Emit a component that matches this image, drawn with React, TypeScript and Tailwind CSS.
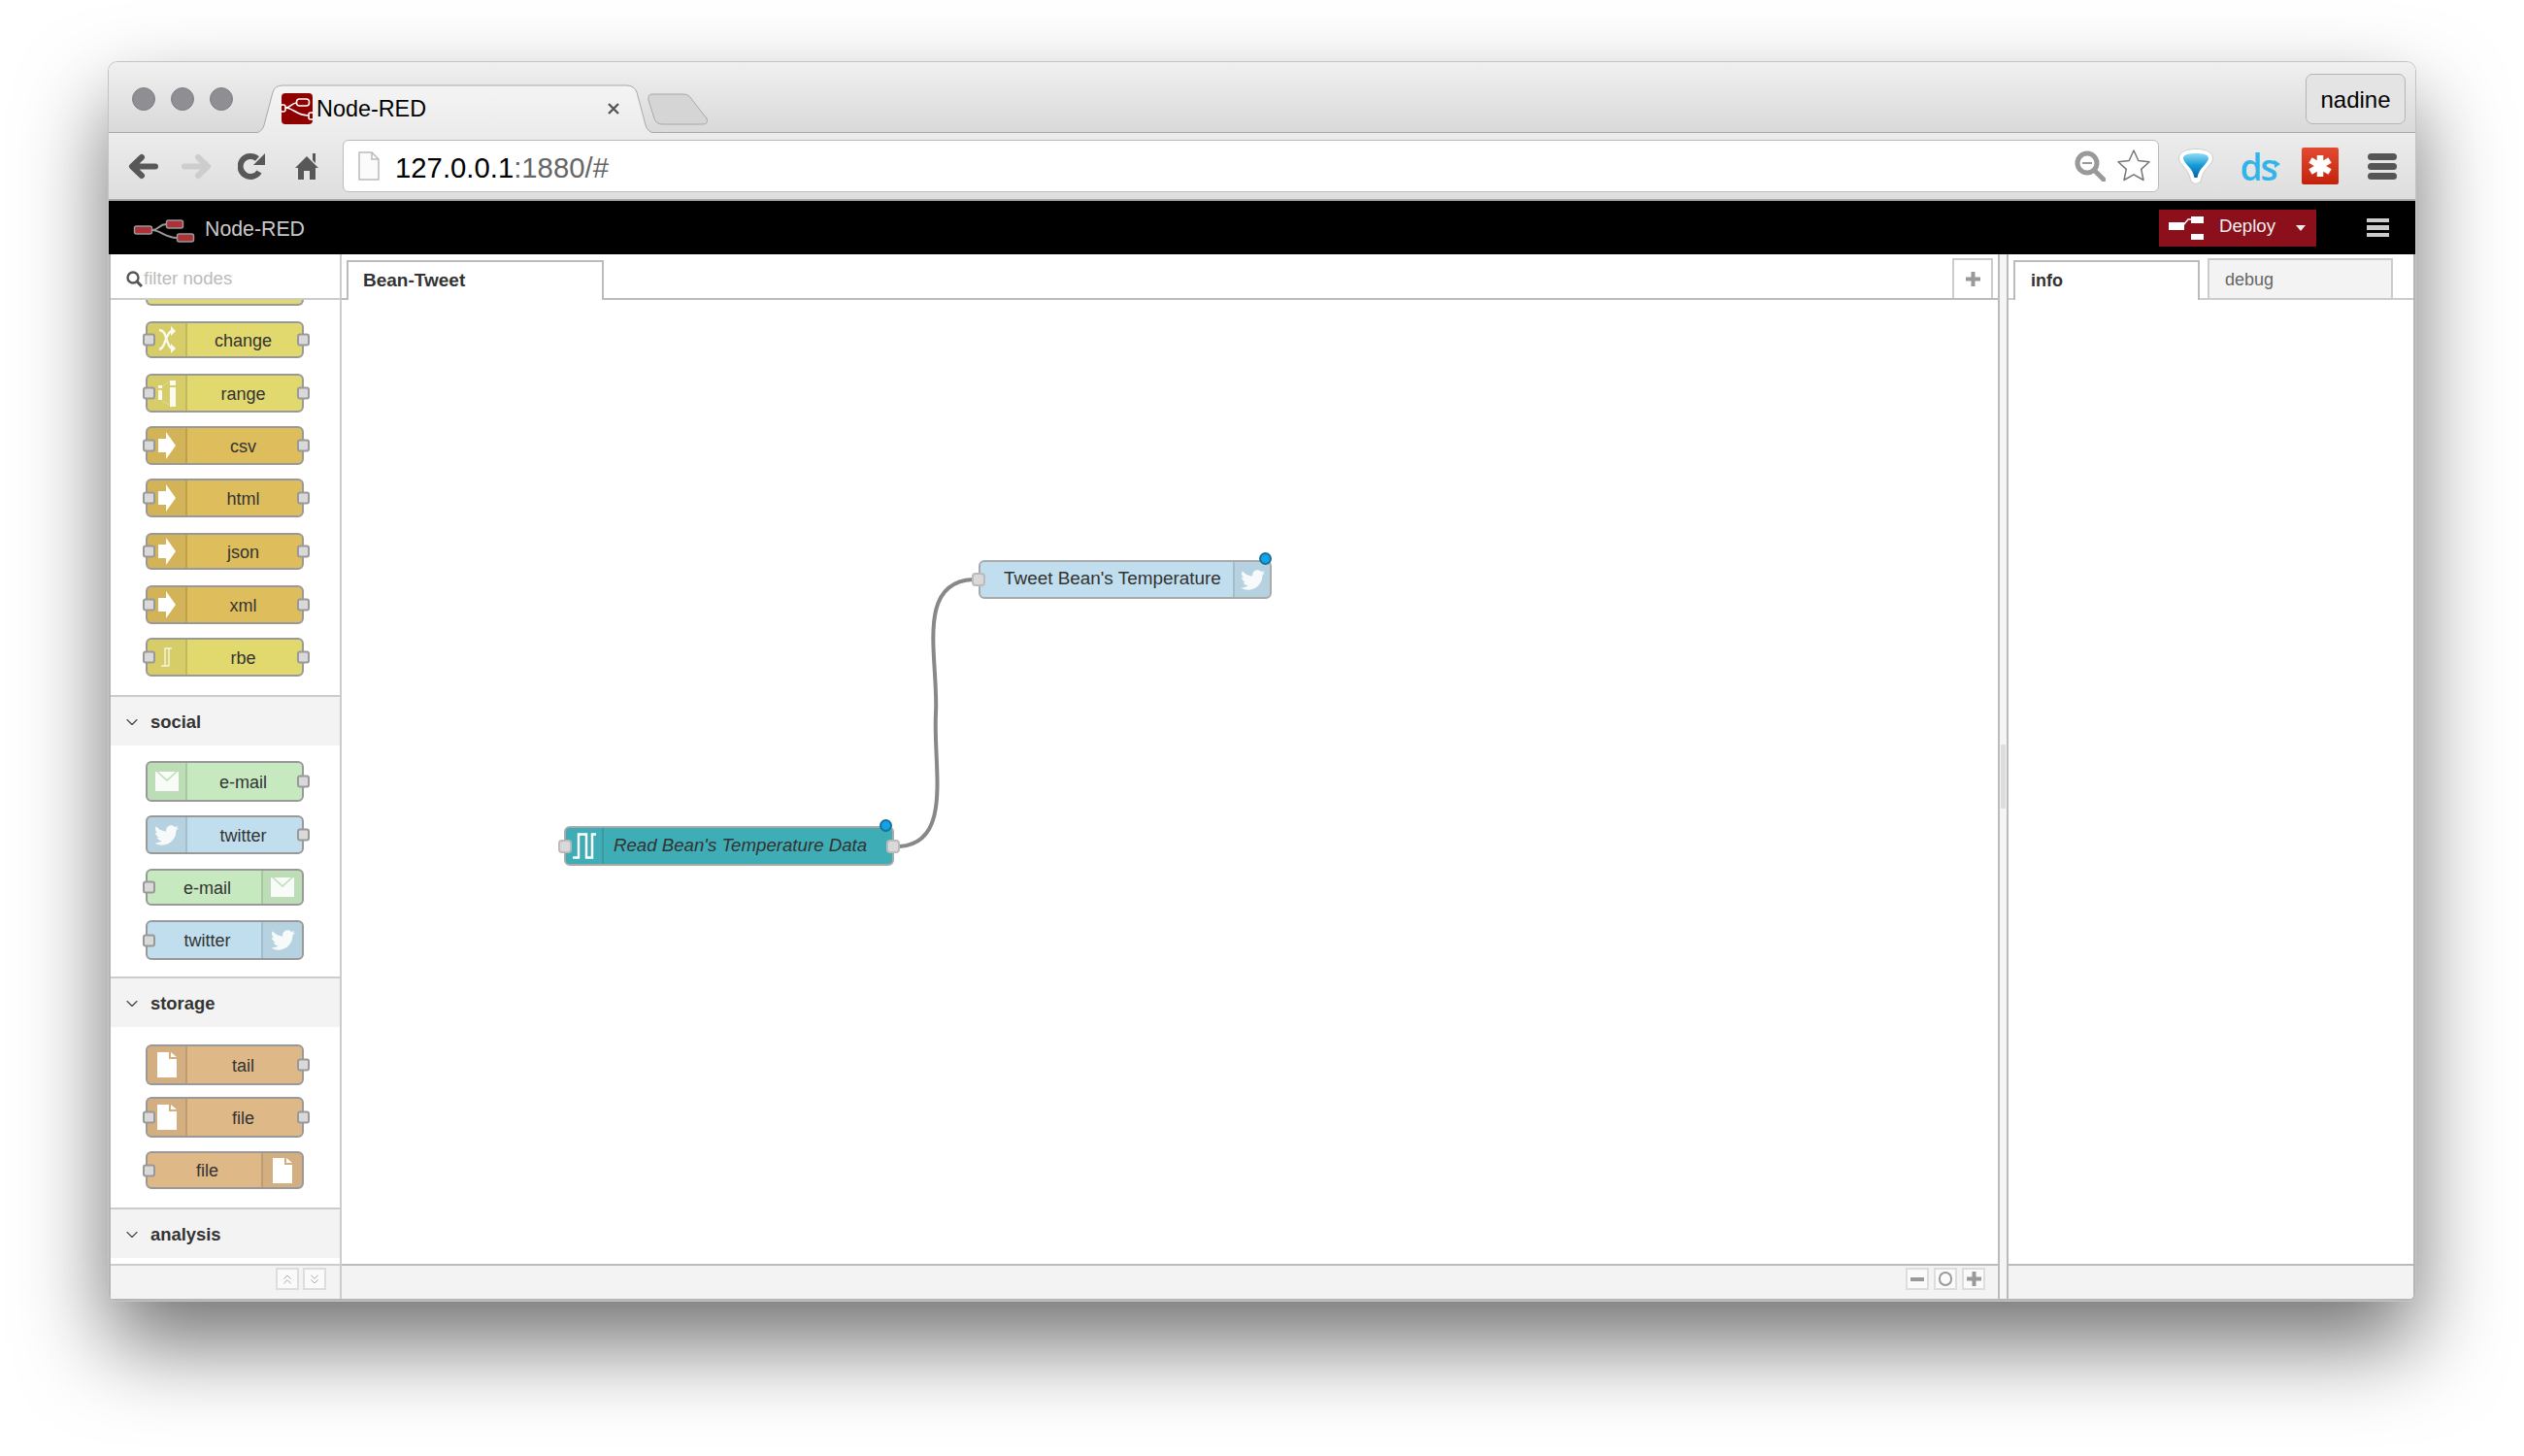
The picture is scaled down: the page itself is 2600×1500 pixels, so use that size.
import React from 'react';
import { FaTwitter } from 'react-icons/fa';
import { ChevronDown, ChevronsDown, ChevronsUp } from 'lucide-react';

type IconKind = 'shuffle' | 'range' | 'arrow' | 'rbe' | 'mail' | 'twitter' | 'file';

const NodeIcon: React.FC<{ kind: IconKind }> = ({ kind }) => {
    if (kind === 'twitter') return <FaTwitter className="text-white opacity-90" size={25} />;
    if (kind === 'shuffle') {
        return (
            <svg width="20" height="30" viewBox="0 0 20 30" fill="none" stroke="white" strokeWidth="2.4" className="opacity-90">
                <path d="M2 5c7 1 6 7 8 11s2 7 5 8" />
                <path d="M2 25c4-1 5-5 6-8s3-10 7-11" />
                <path d="M14 1l5 5-5 5zM14 19l5 5-5 5z" fill="white" stroke="none" />
            </svg>
        );
    }
    if (kind === 'range') {
        return (
            <svg width="20" height="30" viewBox="0 0 20 30" fill="white" className="opacity-90">
                <rect x="1" y="7" width="4" height="3" />
                <rect x="1" y="12" width="4" height="10" />
                <rect x="13" y="2" width="6" height="5" />
                <rect x="13" y="9" width="6" height="20" />
                <path d="M5 8l7-5M5 23l7 4" stroke="white" strokeWidth="0.6" opacity="0.6" />
            </svg>
        );
    }
    if (kind === 'arrow') {
        return (
            <svg width="18" height="28" viewBox="0 0 18 28" fill="white">
                <path d="M0 7h8V0l10 14L8 28v-7H0z" />
            </svg>
        );
    }
    if (kind === 'rbe') {
        return (
            <svg width="12" height="20" viewBox="0 0 12 20" fill="none" stroke="white" strokeWidth="1.4" className="opacity-80">
                <path d="M0 19h4V1h7M8 1v18H4" />
            </svg>
        );
    }
    if (kind === 'mail') {
        return (
            <svg width="24" height="20" viewBox="0 0 24 20" fill="white" className="opacity-90">
                <path d="M0 0h1l11 10L23 0h1v20H0z" />
                <path d="M3 0h18l-9 8z" />
            </svg>
        );
    }
    return (
        <svg width="20" height="26" viewBox="0 0 20 26" fill="white">
            <path d="M0 0h12v7h8v19H0zM14 0l6 5h-6z" />
        </svg>
    );
};

interface NodeProps {
    label: string;
    kind: IconKind;
    color: string;
    size: string;
    iconRight?: boolean;
    input?: boolean;
    output?: boolean;
}

const Port: React.FC<{ side: 'left' | 'right' }> = ({ side }) => (
    <div
        className={`absolute top-1/2 -translate-y-1/2 w-[13px] h-[13px] bg-[#d9d9d9] border-2 border-[#999] rounded-[3px] ${
            side === 'left' ? '-left-[5px]' : '-right-[8px]'
        }`}
    />
);

const PaletteNode: React.FC<NodeProps> = ({ label, kind, color, size, iconRight, input, output }) => (
    <div className={`relative ml-[36px] w-[163px] flex border-2 border-[#999] rounded-[6px] ${color} ${size}`}>
        {input && <Port side="left" />}
        {!iconRight && (
            <div className="w-[41px] shrink-0 flex items-center justify-center bg-black/5 border-r-2 border-black/10 rounded-l-[4px]">
                <NodeIcon kind={kind} />
            </div>
        )}
        <div className={`flex-1 flex items-center justify-center pt-[2px] text-[18px] text-[#333] ${iconRight ? 'pl-[6px]' : 'pr-[3px]'}`}>{label}</div>
        {iconRight && (
            <div className="w-[42px] shrink-0 flex items-center justify-center bg-black/5 border-l-2 border-black/10 rounded-r-[4px]">
                <NodeIcon kind={kind} />
            </div>
        )}
        {output && <Port side="right" />}
    </div>
);

const Category: React.FC<{ title: string; margin: string }> = ({ title, margin }) => (
    <div className={`h-[52px] flex items-center pt-[1px] bg-[#f3f3f3] border-t-2 border-[#ccc] text-[18.4px] font-bold text-[#333] ${margin}`}>
        <ChevronDown className="ml-[12px] mr-[9px] text-[#444]" size={20} strokeWidth={1.4} />
        {title}
    </div>
);

const FooterButton: React.FC<{ children: React.ReactNode }> = ({ children }) => (
    <div className="w-[24px] h-[23px] flex items-center justify-center bg-[#fafafa] border-2 border-[#ddd] text-[#aaa]">{children}</div>
);

const Burger: React.FC = () => (
    <div className="ml-[30px] w-[30px] flex flex-col gap-[3px]">
        <div className="h-[7px] rounded-full bg-[#555]" />
        <div className="h-[7px] rounded-full bg-[#555]" />
        <div className="h-[7px] rounded-full bg-[#555]" />
    </div>
);

const Favicon: React.FC = () => (
    <svg width="32" height="32" viewBox="0 0 32 32" fill="none" stroke="white" strokeWidth="1.6" className="shrink-0">
        <rect width="32" height="32" rx="4" fill="#8f0000" stroke="none" />
        <rect x="15.5" y="6" width="13" height="7" rx="3" fill="#8f0000" />
        <rect x="-1" y="12" width="5" height="7" rx="2" fill="#8f0000" />
        <rect x="28" y="20" width="5" height="7" rx="2" fill="#8f0000" />
        <path d="M4 15c6 0 6-5 11.500-5M4 15c8 0 11 8 24 8" />
    </svg>
);

const Logo: React.FC = () => (
    <svg width="64" height="24" viewBox="137 226 64 24" fill="none" className="shrink-0 mt-[6px]">
        <path d="M157 237c6 0 7-6 14-6M157 237c8 0 13 8 25 8" stroke="#999" strokeWidth="2" />
        <rect x="138.500" y="233" width="18" height="8" rx="2" fill="#ab3238" stroke="#999" strokeWidth="1.500" />
        <rect x="171.500" y="227" width="17" height="8" rx="2" fill="#ab3238" stroke="#999" strokeWidth="1.500" />
        <rect x="182.500" y="241" width="17" height="8" rx="2" fill="#ab3238" stroke="#999" strokeWidth="1.500" />
    </svg>
);

export default function App() {
    return (
        <div className="w-[2600px] h-[1500px] bg-white pt-[64px] pl-[112px] font-['Liberation_Sans',Arial,sans-serif]">
            <div className="w-[2376px] h-[1276px] flex flex-col rounded-t-[9px] rounded-b-[6px] shadow-[0_0_0_1px_#c4c4c4,0_44px_90px_rgba(0,0,0,0.56)]">
                {/* Browser tab strip */}
                <div className="h-[73px] shrink-0 flex items-start rounded-t-[9px] bg-gradient-to-b from-[#f0f0f0] to-[#d9d9d9] border-b border-[#a8a8a8]">
                    <div className="ml-[24px] mt-[26px] flex gap-[16px]">
                        <div className="w-[24px] h-[24px] rounded-full bg-[#8f8f93] border border-[#808084]" />
                        <div className="w-[24px] h-[24px] rounded-full bg-[#8f8f93] border border-[#808084]" />
                        <div className="w-[24px] h-[24px] rounded-full bg-[#8f8f93] border border-[#808084]" />
                    </div>
                    <div className="relative ml-[23px] mt-[23px] w-[411px] h-[50px]">
                        <svg width="411" height="50" viewBox="0 0 411 50" className="absolute inset-0">
                            <defs>
                                <linearGradient id="tabFill" x1="0" y1="0" x2="0" y2="1">
                                    <stop offset="0" stopColor="#f4f4f4" />
                                    <stop offset="1" stopColor="#ececec" />
                                </linearGradient>
                            </defs>
                            <path d="M0 50Q7 49 9 42L18 8Q20 1 28 1L383 1Q390 1 393 8L402 42Q404 49 411 50Z" fill="url(#tabFill)" />
                            <path d="M0 50Q7 49 9 42L18 8Q20 1 28 1L383 1Q390 1 393 8L402 42Q404 49 411 50" fill="none" stroke="#a8a8a8" />
                        </svg>
                        <div className="relative h-[50px] pl-[27px] pr-[36px] flex items-center">
                            <Favicon />
                            <span className="ml-[4px] pt-[2px] text-[23.400px] text-black">Node-RED</span>
                            <svg width="12" height="12" viewBox="0 0 12 12" stroke="#555" strokeWidth="2.400" className="ml-auto">
                                <path d="M1 1l10 10M11 1L1 11" />
                            </svg>
                        </div>
                    </div>
                    <svg width="64" height="33" viewBox="0 0 64 33" className="-ml-[8px] mt-[32px]">
                        <path d="M6 1H38Q44 1 47 7L62 26Q64 32 58 32H16Q10 32 8 26L2 7Q1 1 6 1Z" fill="#d5d5d5" stroke="#a8a8a8" />
                    </svg>
                    <div className="ml-auto mr-[10px] mt-[12px] w-[103px] h-[52px] flex items-center justify-center pt-[2px] rounded-[7px] border border-[#b5b5b5] bg-[#e4e4e4] text-[24px] text-black">
                        nadine
                    </div>
                </div>

                {/* Browser toolbar */}
                <div className="h-[70px] shrink-0 flex items-center pl-[20px] bg-gradient-to-b from-[#ececec] to-[#dedede] border-b-2 border-[#a8a8a8]">
                    <svg width="31" height="27" viewBox="0 0 31 27" fill="none" stroke="#585858" strokeWidth="6" strokeLinecap="round" strokeLinejoin="round">
                        <path d="M28 13.500H5M14 4l-10 9.500L14 23" />
                    </svg>
                    <svg width="31" height="27" viewBox="0 0 31 27" fill="none" stroke="#cdcdcd" strokeWidth="6" strokeLinecap="round" strokeLinejoin="round" className="ml-[24px]">
                        <path d="M3 13.500H26M17 4l10 9.500L17 23" />
                    </svg>
                    <svg width="28" height="28" viewBox="0 0 28 28" fill="none" className="ml-[27px]">
                        <path d="M22 20A10.500 10.500 0 1 1 20 6.500" stroke="#585858" strokeWidth="6" />
                        <path d="M16 13L28 13V1z" fill="#585858" />
                    </svg>
                    <svg width="24" height="28" viewBox="0 0 24 28" fill="#585858" className="ml-[31px]">
                        <path d="M12 4L24 16H21V28H15V19H9V28H3V16H0zM18 1h3v10l-3-3z" />
                    </svg>
                    <div className="ml-[25px] w-[1871px] h-[54px] flex items-center bg-white border border-[#bbb] rounded-[6px] pl-[15px]">
                        <svg width="22" height="30" viewBox="0 0 22 30" fill="#fbfbfb" stroke="#bbb" strokeWidth="1.500">
                            <path d="M1 1h13l7 7v21H1zM14 1v7h7" />
                        </svg>
                        <span className="ml-[16px] pt-[3px] text-[29.300px] text-black">
                            127.0.0.1<span className="text-[#666]">:1880/#</span>
                        </span>
                        <svg width="32" height="32" viewBox="0 0 32 32" fill="none" stroke="#999" className="ml-auto">
                            <circle cx="13" cy="13" r="10" strokeWidth="5" />
                            <path d="M8 13h10" strokeWidth="2" />
                            <path d="M21 21l9 9" strokeWidth="5" strokeLinecap="round" />
                        </svg>
                        <svg width="36" height="36" viewBox="0 0 36 36" fill="#fff" stroke="#777" strokeWidth="1.500" className="ml-[11px] mr-[7px]">
                            <path d="M18 2l4.800 10.500 11.200 1.300-8.300 7.600 2.300 11.100-10-5.700-10 5.700 2.300-11.100L2 13.800l11.200-1.300z" strokeLinejoin="round" />
                        </svg>
                    </div>
                    <svg width="38" height="39" viewBox="-1 -1 38 39" className="ml-[19px]">
                        <defs>
                            <linearGradient id="pinFill" x1="0" y1="0" x2="0" y2="1">
                                <stop offset="0" stopColor="#8fdcf5" />
                                <stop offset="0.5" stopColor="#149ad8" />
                                <stop offset="1" stopColor="#08639f" />
                            </linearGradient>
                        </defs>
                        <path d="M18 0C26 0 36 3 36 10C36 17 26 20 24 32C23 38 13 38 12 32C10 20 0 17 0 10C0 3 10 0 18 0Z" fill="#bbb" opacity="0.6" />
                        <path d="M18 1C26 1 35 3 35 10C35 17 25 20 23 32C22 37 14 37 13 32C11 20 1 17 1 10C1 3 10 1 18 1Z" fill="#fff" />
                        <path d="M18 5C25 5 31 6 31 10C31 15 21 20 19.500 30H16.500C15 20 5 15 5 10C5 6 11 5 18 5Z" fill="url(#pinFill)" />
                    </svg>
                    <div className="relative ml-[27px] w-[36px] h-[28px] flex items-center justify-center text-[37px] leading-none font-semibold text-[#31b4ea] font-['Open_Sans',sans-serif] tracking-[-2px]">
                        ds
                        <svg width="6" height="8" viewBox="0 0 6 8" fill="#31b4ea" className="absolute -right-[5px] top-[8px]">
                            <path d="M0 0l6 4-6 4z" />
                        </svg>
                    </div>
                    <div className="ml-[27px] w-[38px] h-[38px] flex items-center justify-center rounded-[2px] bg-gradient-to-b from-[#e24a30] to-[#c4200a]">
                        <svg width="24" height="24" viewBox="0 0 24 24" stroke="white" strokeWidth="6.500">
                            <path d="M12 1v22M2 6l20 12M22 6L2 18" />
                        </svg>
                    </div>
                    <Burger />
                </div>

                {/* Node-RED header */}
                <div className="h-[55px] shrink-0 flex items-center pl-[25px] pr-[27px] bg-black">
                    <Logo />
                    <span className="ml-[10px] pt-[4px] text-[21.300px] text-[#c8c8c8]">Node-RED</span>
                    <div className="ml-auto w-[162px] h-[38px] flex items-center pl-[10px] bg-[#8c101c]">
                        <svg width="36" height="24" viewBox="0 0 36 24" fill="white" className="shrink-0">
                            <rect y="6" width="16" height="8" />
                            <rect x="23" width="13" height="7" />
                            <rect x="23" y="18" width="13" height="6" />
                            <path d="M15 9l5-6h3" fill="none" stroke="white" strokeWidth="1.500" />
                        </svg>
                        <span className="ml-[16px] pb-[4px] text-[18.670px] text-[#eee]">Deploy</span>
                        <svg width="10" height="6" viewBox="0 0 10 6" fill="#eee" className="ml-[21px]">
                            <path d="M0 0h10L5 6z" />
                        </svg>
                    </div>
                    <div className="ml-[52px] w-[23px] flex flex-col gap-[3px]">
                        <div className="h-[4.500px] bg-[#ccc]" />
                        <div className="h-[4.500px] bg-[#ccc]" />
                        <div className="h-[4.500px] bg-[#ccc]" />
                    </div>
                </div>

                {/* Editor */}
                <div className="flex-1 min-h-0 flex bg-white border-x-2 border-b-2 border-[#b5b5b5] rounded-b-[6px]">
                    {/* Palette */}
                    <div className="w-[238px] shrink-0 flex flex-col border-r-2 border-[#ccc]">
                        <div className="h-[47px] shrink-0 flex items-center pl-[16px] border-b-2 border-[#ccc]">
                            <svg width="17" height="17" viewBox="0 0 17 17" fill="none" stroke="#555" className="mt-[5px]">
                                <circle cx="7" cy="7" r="5.500" strokeWidth="2.400" />
                                <path d="M11 11l5 5" strokeWidth="3" />
                            </svg>
                            <span className="ml-[1px] pt-[4px] text-[18.670px] text-[#bbb]">filter nodes</span>
                        </div>
                        <div className="flex-1 min-h-0 overflow-hidden">
                            <div className="ml-[36px] w-[163px] h-[6px] bg-[#e2d96e] border-x-2 border-b-2 border-[#999] rounded-b-[6px]" />
                            <div className="h-[16px]" />
                            <PaletteNode label="change" kind="shuffle" color="bg-[#e2d96e]" size="h-[38px]" input output />
                            <div className="h-[16px]" />
                            <PaletteNode label="range" kind="range" color="bg-[#e2d96e]" size="h-[40px]" input output />
                            <div className="h-[14px]" />
                            <PaletteNode label="csv" kind="arrow" color="bg-[#debd5c]" size="h-[40px]" input output />
                            <div className="h-[14px]" />
                            <PaletteNode label="html" kind="arrow" color="bg-[#debd5c]" size="h-[40px]" input output />
                            <div className="h-[16px]" />
                            <PaletteNode label="json" kind="arrow" color="bg-[#debd5c]" size="h-[38px]" input output />
                            <div className="h-[16px]" />
                            <PaletteNode label="xml" kind="arrow" color="bg-[#debd5c]" size="h-[40px]" input output />
                            <div className="h-[14px]" />
                            <PaletteNode label="rbe" kind="rbe" color="bg-[#e2d96e]" size="h-[40px]" input output />
                            <Category title="social" margin="mt-[19px]" />
                            <div className="h-[16px]" />
                            <PaletteNode label="e-mail" kind="mail" color="bg-[#c7e9c0]" size="h-[42px]" output />
                            <div className="h-[14px]" />
                            <PaletteNode label="twitter" kind="twitter" color="bg-[#c0deed]" size="h-[40px]" output />
                            <div className="h-[15px]" />
                            <PaletteNode label="e-mail" kind="mail" color="bg-[#c7e9c0]" size="h-[38px]" iconRight input />
                            <div className="h-[15px]" />
                            <PaletteNode label="twitter" kind="twitter" color="bg-[#c0deed]" size="h-[41px]" iconRight input />
                            <Category title="storage" margin="mt-[17px]" />
                            <div className="h-[18px]" />
                            <PaletteNode label="tail" kind="file" color="bg-[#deb887]" size="h-[42px]" output />
                            <div className="h-[12px]" />
                            <PaletteNode label="file" kind="file" color="bg-[#deb887]" size="h-[42px]" input output />
                            <div className="h-[14px]" />
                            <PaletteNode label="file" kind="file" color="bg-[#deb887]" size="h-[39px]" iconRight input />
                            <Category title="analysis" margin="mt-[19px]" />
                        </div>
                        <div className="h-[36px] shrink-0 flex items-start justify-end gap-[4px] pt-[2px] pr-[14px] bg-[#f3f3f3] border-t-2 border-[#ccc]">
                            <FooterButton>
                                <ChevronsUp size={16} strokeWidth={1.5} />
                            </FooterButton>
                            <FooterButton>
                                <ChevronsDown size={16} strokeWidth={1.5} />
                            </FooterButton>
                        </div>
                    </div>

                    {/* Workspace */}
                    <div className="w-[1706px] shrink-0 flex flex-col">
                        <div className="h-[47px] shrink-0 flex items-end justify-between pl-[5px] pr-[5px] border-b-2 border-[#bbb]">
                            <div className="w-[265px] h-[41px] -mb-[2px] flex items-center pl-[15px] bg-white border-x-2 border-t-2 border-[#bbb] text-[19px] font-bold text-[#333]">
                                Bean-Tweet
                            </div>
                            <div className="w-[42px] h-[41px] flex items-center justify-center border-x-2 border-t-2 border-[#ccc]">
                                <svg width="15" height="15" viewBox="0 0 15 15" fill="#999">
                                    <path d="M5.500 0h4v5.500H15v4H9.500V15h-4V9.500H0v-4h5.500z" />
                                </svg>
                            </div>
                        </div>
                        <div className="relative flex-1 min-h-0 overflow-hidden bg-white">
                            <svg width="1706" height="994" viewBox="352 309 1706 994" fill="none" className="absolute inset-0">
                                <path d="M927 872C982 868 961 790 964 735C967 680 942 600 1002 597" stroke="#888" strokeWidth="4" />
                            </svg>
                            {/* Tweet node */}
                            <div className="absolute left-[656px] top-[268px] w-[302px] h-[40px] flex bg-[#c0deed] border-2 border-[#aaa] rounded-[6px]">
                                <div className="flex-1 pl-[24px] pb-[2px] flex items-center text-[18.900px] text-[#333]">Tweet Bean's Temperature</div>
                                <div className="w-[38px] flex items-center justify-center bg-black/5 border-l-2 border-black/10 rounded-r-[4px]">
                                    <NodeIcon kind="twitter" />
                                </div>
                                <div className="absolute top-1/2 -translate-y-1/2 -left-[9px] w-[14px] h-[14px] bg-[#d9d9d9] border-2 border-[#bbb] rounded-[4px]" />
                                <div className="absolute -right-[2px] -top-[10px] w-[13px] h-[13px] rounded-full bg-[#0fa3ea] border-2 border-[#1d6f94]" />
                            </div>
                            {/* Read node */}
                            <div className="absolute left-[229px] top-[542px] w-[340px] h-[41px] flex bg-[#3fadb5] border-2 border-[#aaa] rounded-[6px]">
                                <div className="w-[39px] flex items-center justify-center border-r-2 border-black/10 rounded-l-[4px]">
                                    <svg width="24" height="27" viewBox="0 0 24 27" fill="none" stroke="white" strokeWidth="2.500">
                                        <path d="M0 25.500H6V1.500H14V25.500H20V1.500H24" />
                                    </svg>
                                </div>
                                <div className="flex-1 pl-[10px] pb-[2px] flex items-center text-[18.670px] italic text-[#333]">Read Bean's Temperature Data</div>
                                <div className="absolute top-1/2 -translate-y-1/2 -left-[8px] w-[14px] h-[14px] bg-[#d9d9d9] border-2 border-[#bbb] rounded-[4px]" />
                                <div className="absolute top-1/2 -translate-y-1/2 -right-[8px] w-[14px] h-[14px] bg-[#d9d9d9] border-2 border-[#bbb] rounded-[4px]" />
                                <div className="absolute right-[0px] -top-[9px] w-[13px] h-[13px] rounded-full bg-[#0fa3ea] border-2 border-[#1d6f94]" />
                            </div>
                        </div>
                        <div className="h-[36px] shrink-0 flex items-start justify-end pt-[2px] pr-[13px] bg-[#f3f3f3] border-t-2 border-[#bbb]">
                            <FooterButton>
                                <div className="w-[14px] h-[4px] bg-[#999]" />
                            </FooterButton>
                            <div className="ml-[5px]">
                                <FooterButton>
                                    <div className="w-[14px] h-[15px] rounded-full border-2 border-[#999]" />
                                </FooterButton>
                            </div>
                            <div className="ml-[5px]">
                                <FooterButton>
                                    <svg width="15" height="15" viewBox="0 0 15 15" fill="#999">
                                        <path d="M5.500 0h4v5.500H15v4H9.500V15h-4V9.500H0v-4h5.500z" />
                                    </svg>
                                </FooterButton>
                            </div>
                        </div>
                    </div>

                    {/* Splitter */}
                    <div className="w-[11px] shrink-0 flex items-center justify-center bg-[#f5f5f5] border-x-2 border-[#bbb]">
                        <div className="w-[5px] h-[66px] bg-[#ddd]" />
                    </div>

                    {/* Sidebar */}
                    <div className="flex-1 min-w-0 flex flex-col">
                        <div className="h-[47px] shrink-0 flex items-end gap-[8px] pl-[5px] border-b-2 border-[#ccc]">
                            <div className="w-[192px] h-[41px] -mb-[2px] flex items-center pl-[16px] bg-white border-x-2 border-t-2 border-[#bbb] text-[18px] font-bold text-[#333]">
                                info
                            </div>
                            <div className="w-[191px] h-[41px] flex items-center pl-[16px] pt-[1px] bg-[#f3f3f3] border-x-2 border-t-2 border-[#ccc] text-[18px] text-[#666]">
                                debug
                            </div>
                        </div>
                        <div className="flex-1 bg-white" />
                        <div className="h-[36px] shrink-0 bg-[#f3f3f3] border-t-2 border-[#bbb] rounded-br-[5px]" />
                    </div>
                </div>
            </div>
        </div>
    );
}
